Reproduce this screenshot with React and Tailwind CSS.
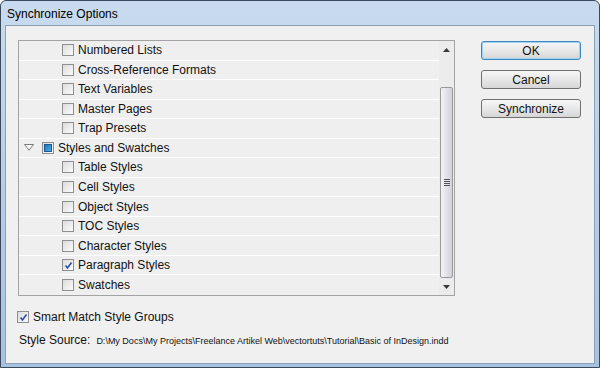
import React from "react";

const font = { fontFamily: '"Liberation Sans", Arial, sans-serif' };

function Box({ state = "off" }) {
  return (
    <span className="relative inline-flex h-[12px] w-[12px] shrink-0 items-center justify-center border border-[#8e8f8f] bg-gradient-to-br from-[#dcdcdc] to-[#fbfbfb]">
      {state === "check" && (
        <svg width="9" height="9" viewBox="0 0 9 9" className="absolute">
          <path d="M1.5 4.5 L3.5 7 L7.5 1.5" fill="none" stroke="#2b4fa8" strokeWidth="1.6" />
        </svg>
      )}
      {state === "mixed" && <span className="h-[8px] w-[8px] bg-gradient-to-br from-[#1f6fb5] to-[#4fb0e8] border border-[#1b5a96]" />}
    </span>
  );
}

function Row({ label, state, last = false, parent = false }) {
  return (
    <div className={`flex items-center ${last ? "" : "border-b border-white"} bg-[#efefef]`}>
      {parent ? (
        <>
          <svg width="10" height="7" viewBox="0 0 10 7" className="ml-[5px] mr-[8px]">
            <path d="M0.5 0.5 L9.5 0.5 L5 6.2 Z" fill="#f8f8f8" stroke="#7c7c7c" strokeWidth="1" />
          </svg>
          <Box state={state} />
          <span className="ml-[4px] text-[12px] text-[#111]">{label}</span>
        </>
      ) : (
        <>
          <span className="w-[43px] shrink-0" />
          <Box state={state} />
          <span className="ml-[4px] text-[12px] text-[#111]">{label}</span>
        </>
      )}
    </div>
  );
}

function Btn({ children, def }) {
  return (
    <div
      className={`flex h-[19px] w-[100px] items-center justify-center rounded-[3px] border text-[12px] text-[#111] bg-gradient-to-b from-[#f6f6f6] via-[#e8e8e8] to-[#d6d6d6] ${
        def ? "border-[#3d88c0] shadow-[inset_0_0_0_1px_#9fd4f4]" : "border-[#707070]"
      }`}
    >
      {children}
    </div>
  );
}

export default function App() {
  const rows = [
    ["Numbered Lists", "off"],
    ["Cross-Reference Formats", "off"],
    ["Text Variables", "off"],
    ["Master Pages", "off"],
    ["Trap Presets", "off"],
    ["Styles and Swatches", "mixed", true],
    ["Table Styles", "off"],
    ["Cell Styles", "off"],
    ["Object Styles", "off"],
    ["TOC Styles", "off"],
    ["Character Styles", "off"],
    ["Paragraph Styles", "check"],
    ["Swatches", "off"],
  ];
  return (
    <div style={font} className="h-[368px] w-[600px] bg-white">
      <div className="flex h-[368px] w-[600px] flex-col rounded-t-[6px] border border-[#3a4a5c] bg-gradient-to-b from-[#c9dbee] to-[#a7c2e0]">
        <div className="flex h-[24px] items-center pl-[6px] pt-[1px] text-[12px] text-black">Synchronize Options</div>
        <div className="mx-[4px] mb-[3px] flex flex-1 flex-col border border-[#8aa0b8] bg-[#f0f0f0] pl-[12px] pt-[14px]">
          <div className="flex">
            <div className="flex h-[256px] w-[437px] border border-[#a3a3a3] bg-[#efefef]">
              <div className="grid h-[254px] flex-1 grid-rows-[repeat(13,1fr)]">
                {rows.map(([l, s, p], i) => (
                  <Row key={l} label={l} state={s} parent={p} last={i === rows.length - 1} />
                ))}
              </div>
              <div className="flex w-[15px] flex-col items-center bg-[#ececec]">
                <svg width="7" height="4" viewBox="0 0 7 4" className="mt-[7px]">
                  <path d="M0 4 L3.5 0 L7 4 Z" fill="#3a3a3a" />
                </svg>
                <div className="mt-[35px] flex h-[191px] w-[13px] items-center justify-center rounded-[2px] border border-[#9a9a9a] bg-gradient-to-r from-[#f4f4f6] via-[#e2e3e8] to-[#d0d2d8]">
                  <div className="flex flex-col gap-[1px]">
                    <span className="h-[1px] w-[6px] bg-[#555]" />
                    <span className="h-[1px] w-[6px] bg-[#555]" />
                    <span className="h-[1px] w-[6px] bg-[#555]" />
                    <span className="h-[1px] w-[6px] bg-[#555]" />
                  </div>
                </div>
                <svg width="7" height="4" viewBox="0 0 7 4" className="mt-[7px]">
                  <path d="M0 0 L3.5 4 L7 0 Z" fill="#3a3a3a" />
                </svg>
              </div>
            </div>
            <div className="ml-[26px] mt-[1px] flex flex-col gap-[10px]">
              <Btn def>OK</Btn>
              <Btn>Cancel</Btn>
              <Btn>Synchronize</Btn>
            </div>
          </div>
          <div className="mt-[12px] ml-[-1px] flex items-center">
            <Box state="check" />
            <span className="ml-[4px] text-[12px] text-[#111]">Smart Match Style Groups</span>
          </div>
          <div className="mt-[5px] ml-[1px] flex items-baseline">
            <span className="text-[12px] text-[#111]">Style Source:</span>
            <span className="ml-[6px] text-[9px] text-[#111]">D:\My Docs\My Projects\Freelance Artikel Web\vectortuts\Tutorial\Basic of InDesign.indd</span>
          </div>
        </div>
      </div>
    </div>
  );
}
